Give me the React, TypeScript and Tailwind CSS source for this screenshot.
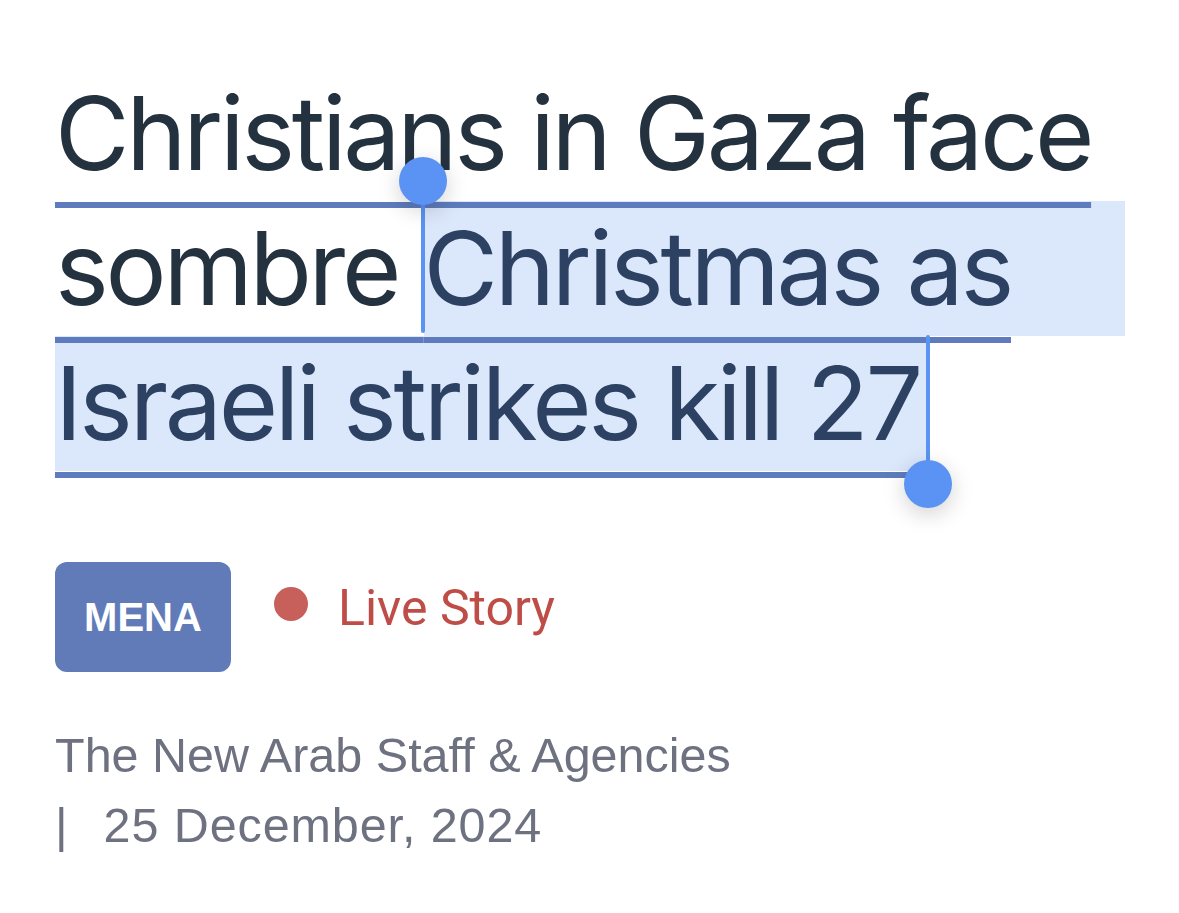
export default function App() {
  const ul =
    "underline decoration-[#5e7cbd] decoration-[6px] underline-offset-[32px] [text-decoration-skip-ink:none]";
  return (
    <div className="min-h-[913px] w-full bg-white">
      <div className="pl-[55px] pr-[54px] pt-[66px] pb-[40px]">
        <h1 className="relative font-['Inter',sans-serif] text-[102px] leading-[135px] font-normal text-[#243240] tracking-[-3.3px]">
          <div className="relative z-30 h-[135px] whitespace-nowrap">
            <span className={ul}>Christians in Gaza face</span>
          </div>
          <div className="relative z-20 h-[135px] flex whitespace-pre">
            <span className={ul}>sombre </span>
            <span className="flex-1 bg-[#dbe7fb] text-[#2d4263]">
              <span className={ul}>Christmas as</span>
            </span>
          </div>
          <div className="relative z-10 h-[135px] flex whitespace-nowrap">
            <span className="bg-[#dbe7fb] text-[#2d4263] pr-[6px]">
              <span className={ul}>Israeli strikes kill 27</span>
            </span>
          </div>

          {/* selection handle start */}
          <div className="absolute z-40 left-[366px] top-[115px] w-[4px] h-[152px] rounded-full bg-[#5a93f4]" />
          <div className="absolute z-40 left-[344px] top-[91px] w-[48px] h-[48px] rounded-full bg-[#5a93f4] shadow-[0_6px_22px_rgba(0,0,0,0.18)]" />
          {/* selection handle end */}
          <div className="absolute z-40 left-[871px] top-[269px] w-[4px] h-[150px] rounded-full bg-[#5a93f4]" />
          <div className="absolute z-40 left-[849px] top-[394px] w-[48px] h-[48px] rounded-full bg-[#5a93f4] shadow-[0_6px_22px_rgba(0,0,0,0.18)]" />
        </h1>

        <div className="mt-[91px] flex items-start">
          <div className="w-[176px] h-[110px] rounded-[12px] bg-[#617bb8] flex items-center justify-center text-white font-['Liberation_Sans',Arial,sans-serif] font-bold text-[40px]">
            MENA
          </div>
          <div className="ml-[43px] mt-[16px] flex items-center h-[60px]">
            <div className="w-[34px] h-[34px] rounded-full bg-[#c75f5a] -mt-[8px]" />
            <span className="ml-[30px] font-['Roboto',sans-serif] text-[50px] leading-[60px] text-[#bf4d47]">
              Live Story
            </span>
          </div>
        </div>

        <div className="mt-[48px] font-['Liberation_Sans',Arial,sans-serif] text-[48.5px] leading-[70px] text-[#6d7180]">
          <div>The New Arab Staff &amp; Agencies</div>
          <div className="flex">
            <span>|</span>
            <span className="ml-[36px] tracking-[0.9px]">25 December, 2024</span>
          </div>
        </div>
      </div>
    </div>
  );
}
